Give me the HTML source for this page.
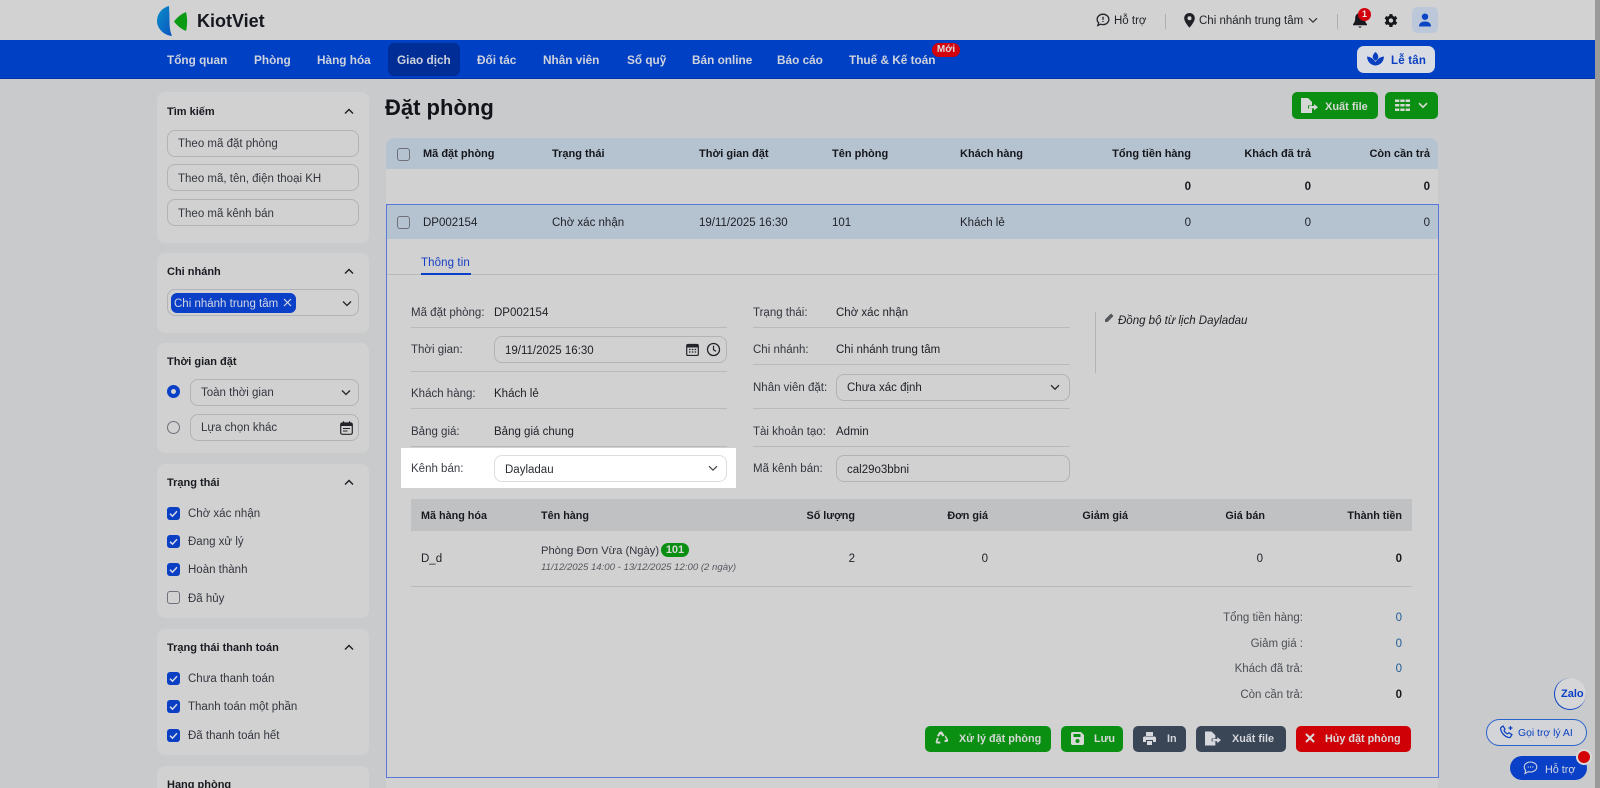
<!DOCTYPE html>
<html><head><meta charset="utf-8"><title>Đặt phòng</title>
<style>
*{box-sizing:border-box}
html,body{margin:0;padding:0;width:1600px;height:788px;overflow:hidden;background:#c9cacc}
body{position:relative;font-family:"Liberation Sans",sans-serif;font-size:11.5px;color:#1d1f26}
div,span.t,svg{position:absolute}
.t{position:absolute;white-space:nowrap;line-height:16px;height:16px;letter-spacing:0;margin-top:1px}
.r{transform:translateX(-100%)}
.b{font-weight:bold;font-size:11px}
.m{color:#202229}
.g{color:#33363e}
.n{color:#cfd3dd;font-weight:bold;font-size:11.8px;margin-top:0}
.p{background:#d1d1d1;border-radius:8px;left:157px;width:212px}
.i{border:1px solid #b2b3b6;border-radius:8px;background:#d1d1d1}
.l{height:1px;background:#b9babc}
.h{font-weight:bold;color:#191b20;font-size:11px}
.c{width:13px;height:13px;border-radius:3px;background:#0a3fc4;left:167px}
.u{width:13px;height:13px;border-radius:3px;border:1.2px solid #6e7179;background:#d1d1d1}
.btn{border-radius:5px;height:26px;color:#d8dade;font-weight:bold;font-size:11px}
</style></head><body>

<!-- top bar -->
<div style="left:0;top:0;width:1600px;height:40px;background:#d2d2d2"></div>
<svg style="left:155px;top:4px" width="34" height="34" viewBox="155 4 34 34"><defs><linearGradient id="lg" x1="0" y1="0" x2="1" y2="1"><stop offset="0" stop-color="#0a8dc8"/><stop offset="1" stop-color="#0a55c0"/></linearGradient></defs><path d="M169 6C161 8 157 15 157 21c0 7 6 14 15 15-2-5-2.500-9-2.500-15 0-5-.2-10-.5-15z" fill="url(#lg)"/><path d="M174 21.500c3-4 7-7.500 12-9.500 1.500 6 1.500 13 0 19-5-2-9-5.500-12-9.500z" fill="#0a9a14"/></svg>
<span class="t b" style="left:197px;top:11px;height:18px;line-height:18px;font-size:18px;color:#15181f">KiotViet</span>

<svg style="left:1096px;top:13px" width="14" height="14" viewBox="0 0 14 14"><path d="M7 1.200c3.300 0 5.900 2.300 5.900 5.200S10.300 11.600 7 11.600c-.8 0-1.500-.1-2.200-.4L1.800 12.500l.9-2.700C1.600 8.900 1.100 7.700 1.100 6.400 1.100 3.500 3.700 1.200 7 1.200z" fill="none" stroke="#24262c" stroke-width="1.300"/><path d="M7 3.700v3.200M7 8v1" stroke="#24262c" stroke-width="1.300"/></svg>
<span class="t m" style="left:1114px;top:12px">Hỗ trợ</span>
<div style="left:1165px;top:14px;width:1px;height:15px;background:#aeafb1"></div>
<svg style="left:1184px;top:13px" width="11" height="15" viewBox="0 0 11 15"><path d="M5.500 0C2.500 0 .2 2.300 .2 5.200c0 3.700 5.300 9.500 5.300 9.500s5.300-5.800 5.300-9.500C10.800 2.300 8.500 0 5.500 0zm0 7.200a2 2 0 110-4 2 2 0 010 4z" fill="#1f2126"/></svg>
<span class="t m" style="left:1199px;top:12px">Chi nhánh trung tâm</span>
<svg style="left:1308px;top:17px" width="10" height="7" viewBox="0 0 10 7"><path d="M1 1.200l4 4 4-4" fill="none" stroke="#33353b" stroke-width="1.200"/></svg>
<div style="left:1337px;top:14px;width:1px;height:15px;background:#aeafb1"></div>
<svg style="left:1352px;top:12px" width="16" height="17" viewBox="0 0 16 17"><path d="M8 1C5 1 3.200 3.300 3.200 6.200c0 3.800-1.500 5-2.200 6v1h14v-1c-.7-1-2.200-2.200-2.200-6C12.800 3.300 11 1 8 1z" fill="#17191e"/><path d="M6.300 14.500a1.800 1.800 0 003.400 0z" fill="#17191e"/></svg>
<div style="left:1358px;top:8px;width:13px;height:13px;border-radius:50%;background:#d4000c;color:#e6e6e6;font-size:9px;font-weight:bold;text-align:center;line-height:13px">1</div>
<svg style="left:1383px;top:13px" width="15" height="15" viewBox="0 0 24 24"><path d="M20.500 13.300a8.700 8.700 0 000-2.600l2.300-1.800-2.400-4.100-2.700 1.100a8.500 8.500 0 00-2.200-1.300L15.100 1.700h-4.800l-.4 2.900a8.500 8.500 0 00-2.200 1.300L5 4.800 2.600 8.900l2.300 1.800a8.700 8.700 0 000 2.600l-2.300 1.800L5 19.200l2.700-1.100a8.500 8.500 0 002.200 1.300l.4 2.900h4.800l.4-2.900a8.500 8.500 0 002.200-1.300l2.700 1.100 2.400-4.100zM12.700 15.500a3.500 3.500 0 110-7 3.500 3.500 0 010 7z" fill="#15171b" fill-rule="evenodd"/></svg>
<div style="left:1412px;top:7px;width:26px;height:26px;border-radius:5px;background:#bcc8da"></div>
<svg style="left:1418px;top:13px" width="14" height="14" viewBox="0 0 14 14"><circle cx="7" cy="3.700" r="3.200" fill="#0a45c4"/><path d="M1 13.500c0-3.500 2.500-5 6-5s6 1.500 6 5z" fill="#0a45c4"/></svg>

<!-- nav -->
<div style="left:0;top:40px;width:1595px;height:39px;background:#0040c4;border-bottom:1px solid #0034a6"></div>
<div style="left:388px;top:43px;width:72px;height:33px;border-radius:6px;background:#002e96"></div>
<span class="t n" style="left:167px;top:52px">Tổng quan</span>
<span class="t n" style="left:254px;top:52px">Phòng</span>
<span class="t n" style="left:317px;top:52px">Hàng hóa</span>
<span class="t n" style="left:397px;top:52px">Giao dịch</span>
<span class="t n" style="left:477px;top:52px">Đối tác</span>
<span class="t n" style="left:543px;top:52px">Nhân viên</span>
<span class="t n" style="left:627px;top:52px">Sổ quỹ</span>
<span class="t n" style="left:692px;top:52px">Bán online</span>
<span class="t n" style="left:777px;top:52px">Báo cáo</span>
<span class="t n" style="left:849px;top:52px">Thuế &amp; Kế toán</span>
<div style="left:932px;top:43px;width:28px;height:14px;border-radius:7px;background:#d4000c;color:#dcdcdc;font-size:10px;font-weight:bold;text-align:center;line-height:14px">Mới</div>
<div style="left:1357px;top:46px;width:78px;height:27px;border-radius:7px;background:#d9dce3"></div>
<svg style="left:1367px;top:52px" width="17" height="14" viewBox="0 0 17 14"><path d="M8.500 0c1.800 1.500 2.800 3.300 2.800 5 0 1.300-1.200 2.800-2.800 3.800C6.900 7.800 5.700 6.300 5.700 5 5.700 3.300 6.700 1.500 8.500 0z" fill="#0a40c0"/><path d="M0 4.500c3.500 .3 6.500 2.300 8.500 5.500 2-3.200 5-5.200 8.500-5.500-.2 5-3.500 8.700-8.500 9-5-.3-8.300-4-8.500-9z" fill="#0a40c0"/></svg>
<span class="t b" style="left:1391px;top:52px;color:#0a40c0;font-size:11.500px;letter-spacing:.2px">Lễ tân</span>

<!-- scrollbar -->
<div style="left:1595px;top:0;width:5px;height:788px;background:#9a9a9a"></div>

<!-- sidebar panels -->
<div class="p" style="top:92px;height:151px"></div>
<div class="p" style="top:253px;height:80px"></div>
<div class="p" style="top:343px;height:110px"></div>
<div class="p" style="top:464px;height:154px"></div>
<div class="p" style="top:629px;height:126px"></div>
<div class="p" style="top:766px;height:30px"></div>

<span class="t h" style="left:167px;top:103px">Tìm kiếm</span>
<span class="t h" style="left:167px;top:263px">Chi nhánh</span>
<span class="t h" style="left:167px;top:353px">Thời gian đặt</span>
<span class="t h" style="left:167px;top:474px">Trạng thái</span>
<span class="t h" style="left:167px;top:639px">Trạng thái thanh toán</span>
<span class="t h" style="left:167px;top:776px">Hạng phòng</span>
<svg style="left:344px;top:108px" width="10" height="7" viewBox="0 0 10 7"><path d="M1 5.500l4-4 4 4" fill="none" stroke="#191b20" stroke-width="1.400"/></svg>
<svg style="left:344px;top:268px" width="10" height="7" viewBox="0 0 10 7"><path d="M1 5.500l4-4 4 4" fill="none" stroke="#191b20" stroke-width="1.400"/></svg>
<svg style="left:344px;top:479px" width="10" height="7" viewBox="0 0 10 7"><path d="M1 5.500l4-4 4 4" fill="none" stroke="#191b20" stroke-width="1.400"/></svg>
<svg style="left:344px;top:644px" width="10" height="7" viewBox="0 0 10 7"><path d="M1 5.500l4-4 4 4" fill="none" stroke="#191b20" stroke-width="1.400"/></svg>

<div class="i" style="left:167px;top:130px;width:192px;height:27px"></div>
<div class="i" style="left:167px;top:164px;width:192px;height:27px"></div>
<div class="i" style="left:167px;top:199px;width:192px;height:27px"></div>
<span class="t g" style="left:178px;top:135px">Theo mã đặt phòng</span>
<span class="t g" style="left:178px;top:170px">Theo mã, tên, điện thoại KH</span>
<span class="t g" style="left:178px;top:205px">Theo mã kênh bán</span>

<div class="i" style="left:167px;top:289px;width:192px;height:27px"></div>
<div style="left:171px;top:293px;width:125px;height:20px;border-radius:6px;background:#0a40c8"></div>
<span class="t" style="left:174px;top:295px;color:#d4d8e2">Chi nhánh trung tâm</span>
<svg style="left:283px;top:298px" width="9" height="9" viewBox="0 0 9 9"><path d="M1 1l7 7M8 1L1 8" stroke="#d4d8e2" stroke-width="1.200"/></svg>
<svg style="left:342px;top:300px" width="10" height="7" viewBox="0 0 10 7"><path d="M1 1.500l4 4 4-4" fill="none" stroke="#22242a" stroke-width="1.300"/></svg>

<div style="left:167px;top:385px;width:13px;height:13px;border-radius:50%;border:4px solid #0a40c8;background:#d4d4d4"></div>
<div style="left:167px;top:421px;width:13px;height:13px;border-radius:50%;border:1.200px solid #6e7179"></div>
<div class="i" style="left:190px;top:379px;width:169px;height:27px"></div>
<div class="i" style="left:190px;top:414px;width:169px;height:27px"></div>
<span class="t g" style="left:201px;top:384px">Toàn thời gian</span>
<span class="t g" style="left:201px;top:419px">Lựa chọn khác</span>
<svg style="left:341px;top:389px" width="10" height="7" viewBox="0 0 10 7"><path d="M1 1.500l4 4 4-4" fill="none" stroke="#22242a" stroke-width="1.300"/></svg>
<svg style="left:340px;top:421px" width="13" height="14" viewBox="0 0 13 14"><rect x=".7" y="2" width="11.600" height="11.300" rx="1.500" fill="none" stroke="#22242a" stroke-width="1.200"/><path d="M.7 2.500h11.600v2.500H.7z" fill="#22242a"/><path d="M3.500 .3v2M9.500 .3v2" stroke="#22242a" stroke-width="1.200"/><path d="M3 7.500h7M3 10h4.500" stroke="#22242a"/></svg>

<!-- checkboxes -->
<div class="c" style="top:507px"></div><div class="c" style="top:535px"></div><div class="c" style="top:563px"></div>
<div class="u" style="left:167px;top:591px"></div>
<div class="c" style="top:672px"></div><div class="c" style="top:700px"></div><div class="c" style="top:729px"></div>
<svg style="left:167px;top:507px" width="13" height="13" viewBox="0 0 13 13"><path d="M3 6.700l2.500 2.500L10 4.200" fill="none" stroke="#d8dbe4" stroke-width="1.500"/></svg>
<svg style="left:167px;top:535px" width="13" height="13" viewBox="0 0 13 13"><path d="M3 6.700l2.500 2.500L10 4.200" fill="none" stroke="#d8dbe4" stroke-width="1.500"/></svg>
<svg style="left:167px;top:563px" width="13" height="13" viewBox="0 0 13 13"><path d="M3 6.700l2.500 2.500L10 4.200" fill="none" stroke="#d8dbe4" stroke-width="1.500"/></svg>
<svg style="left:167px;top:672px" width="13" height="13" viewBox="0 0 13 13"><path d="M3 6.700l2.500 2.500L10 4.200" fill="none" stroke="#d8dbe4" stroke-width="1.500"/></svg>
<svg style="left:167px;top:700px" width="13" height="13" viewBox="0 0 13 13"><path d="M3 6.700l2.500 2.500L10 4.200" fill="none" stroke="#d8dbe4" stroke-width="1.500"/></svg>
<svg style="left:167px;top:729px" width="13" height="13" viewBox="0 0 13 13"><path d="M3 6.700l2.500 2.500L10 4.200" fill="none" stroke="#d8dbe4" stroke-width="1.500"/></svg>
<span class="t g" style="left:188px;top:505px">Chờ xác nhận</span>
<span class="t g" style="left:188px;top:533px">Đang xử lý</span>
<span class="t g" style="left:188px;top:561px">Hoàn thành</span>
<span class="t g" style="left:188px;top:590px">Đã hủy</span>
<span class="t g" style="left:188px;top:670px">Chưa thanh toán</span>
<span class="t g" style="left:188px;top:698px">Thanh toán một phần</span>
<span class="t g" style="left:188px;top:727px">Đã thanh toán hết</span>

<!-- title -->
<span class="t b" style="left:385px;top:94px;height:26px;line-height:26px;font-size:22px;color:#111318">Đặt phòng</span>
<div style="left:1292px;top:92px;width:86px;height:27px;border-radius:5px;background:#0b8f13"></div>
<svg style="left:1301px;top:98px" width="17" height="15" viewBox="0 0 17 15"><path d="M0 0h7l4 4v3.500H7v3h4V15H0z" fill="#d6d8d6"/><path d="M8 8h5V6l4 3.200-4 3.200v-2H8z" fill="#d6d8d6"/></svg>
<span class="t b" style="left:1325px;top:98px;color:#d6d8d6">Xuất file</span>
<div style="left:1385px;top:92px;width:53px;height:27px;border-radius:5px;background:#0b8f13"></div>
<svg style="left:1395px;top:99px" width="15" height="13" viewBox="0 0 15 13"><path d="M0 .5h4.300v2.500H0zM5.300 .5h4.300v2.500H5.300zM10.600 .5H15v2.500h-4.400zM0 5h4.300v2.500H0zM5.300 5h4.300v2.500H5.300zM10.600 5H15v2.500h-4.400zM0 9.500h4.300V12H0zM5.300 9.500h4.300V12H5.300zM10.600 9.500H15V12h-4.400z" fill="#d6d8d6"/></svg>
<svg style="left:1418px;top:102px" width="10" height="7" viewBox="0 0 10 7"><path d="M1 1.200l4 4 4-4" fill="none" stroke="#d6d8d6" stroke-width="1.600"/></svg>

<!-- main table -->
<div style="left:386px;top:138px;width:1052px;height:660px;background:#d1d1d1;border-radius:8px 8px 0 0"></div>
<div style="left:386px;top:138px;width:1052px;height:31px;background:#b5c2d0;border-radius:8px 8px 0 0"></div>
<div class="u" style="left:397px;top:148px;background:transparent"></div>
<span class="t b" style="left:423px;top:145px;color:#15171c">Mã đặt phòng</span>
<span class="t b" style="left:552px;top:145px;color:#15171c">Trạng thái</span>
<span class="t b" style="left:699px;top:145px;color:#15171c">Thời gian đặt</span>
<span class="t b" style="left:832px;top:145px;color:#15171c">Tên phòng</span>
<span class="t b" style="left:960px;top:145px;color:#15171c">Khách hàng</span>
<span class="t b r" style="left:1191px;top:145px;color:#15171c">Tổng tiền hàng</span>
<span class="t b r" style="left:1311px;top:145px;color:#15171c">Khách đã trả</span>
<span class="t b r" style="left:1430px;top:145px;color:#15171c">Còn cần trả</span>
<span class="t b r" style="left:1191px;top:178px;color:#15171c;font-size:11.500px">0</span>
<span class="t b r" style="left:1311px;top:178px;color:#15171c;font-size:11.500px">0</span>
<span class="t b r" style="left:1430px;top:178px;color:#15171c;font-size:11.500px">0</span>

<div style="left:386px;top:204px;width:1053px;height:574px;border:1px solid #5a78dc"></div>
<div style="left:387px;top:205px;width:1051px;height:34px;background:#b5c2d0"></div>
<div class="u" style="left:397px;top:216px;background:transparent"></div>
<span class="t m" style="left:423px;top:214px">DP002154</span>
<span class="t m" style="left:552px;top:214px">Chờ xác nhận</span>
<span class="t m" style="left:699px;top:214px">19/11/2025 16:30</span>
<span class="t m" style="left:832px;top:214px">101</span>
<span class="t m" style="left:960px;top:214px">Khách lẻ</span>
<span class="t m r" style="left:1191px;top:214px">0</span>
<span class="t m r" style="left:1311px;top:214px">0</span>
<span class="t m r" style="left:1430px;top:214px">0</span>

<span class="t" style="left:421px;top:254px;color:#1640c4;letter-spacing:.1px">Thông tin</span>
<div class="l" style="left:387px;top:274px;width:1051px"></div>
<div style="left:421px;top:273px;width:50px;height:2px;background:#0a3fc8"></div>

<!-- form left -->
<span class="t g" style="left:411px;top:304px">Mã đặt phòng:</span>
<span class="t m" style="left:494px;top:304px">DP002154</span>
<div class="l" style="left:411px;top:327px;width:316px"></div>
<span class="t g" style="left:411px;top:341px">Thời gian:</span>
<div class="i" style="left:494px;top:336px;width:233px;height:27px"></div>
<span class="t m" style="left:505px;top:342px">19/11/2025 16:30</span>
<svg style="left:686px;top:343px" width="13" height="13" viewBox="0 0 13 13"><rect x=".7" y="1.500" width="11.600" height="11" rx="1.300" fill="none" stroke="#22242a" stroke-width="1.200"/><path d="M.7 2h11.600v2.500H.7z" fill="#22242a"/><path d="M3 6.500h1.500M5.800 6.500h1.500M8.600 6.500h1.500M3 9h1.500M5.800 9h1.500M8.600 9h1.500" stroke="#22242a" stroke-width="1.200"/></svg>
<svg style="left:706px;top:342px" width="15" height="15" viewBox="0 0 15 15"><circle cx="7.500" cy="7.500" r="6" fill="none" stroke="#22242a" stroke-width="1.300"/><path d="M7.500 3.800v4l2.500 1.500" fill="none" stroke="#22242a" stroke-width="1.200"/></svg>
<div class="l" style="left:411px;top:371px;width:316px"></div>
<span class="t g" style="left:411px;top:385px">Khách hàng:</span>
<span class="t m" style="left:494px;top:385px">Khách lẻ</span>
<div class="l" style="left:411px;top:408px;width:316px"></div>
<span class="t g" style="left:411px;top:423px">Bảng giá:</span>
<span class="t m" style="left:494px;top:423px">Bảng giá chung</span>
<div class="l" style="left:411px;top:446px;width:316px"></div>
<div style="left:401px;top:448px;width:335px;height:40px;background:#fff"></div>
<span class="t" style="left:411px;top:460px;color:#3a3d45">Kênh bán:</span>
<div style="left:494px;top:455px;width:233px;height:27px;border:1px solid #dcdde0;border-radius:8px;background:#fff"></div>
<span class="t" style="left:505px;top:461px;color:#2a2d34">Dayladau</span>
<svg style="left:708px;top:465px" width="10" height="7" viewBox="0 0 10 7"><path d="M1 1.200l4 4 4-4" fill="none" stroke="#444" stroke-width="1.200"/></svg>

<!-- form right -->
<span class="t g" style="left:753px;top:304px">Trạng thái:</span>
<span class="t m" style="left:836px;top:304px">Chờ xác nhận</span>
<div class="l" style="left:753px;top:327px;width:317px"></div>
<span class="t g" style="left:753px;top:341px">Chi nhánh:</span>
<span class="t m" style="left:836px;top:341px">Chi nhánh trung tâm</span>
<div class="l" style="left:753px;top:364px;width:317px"></div>
<span class="t g" style="left:753px;top:379px">Nhân viên đặt:</span>
<div class="i" style="left:836px;top:374px;width:234px;height:27px"></div>
<span class="t m" style="left:847px;top:379px">Chưa xác định</span>
<svg style="left:1050px;top:384px" width="10" height="7" viewBox="0 0 10 7"><path d="M1 1.200l4 4 4-4" fill="none" stroke="#22242a" stroke-width="1.300"/></svg>
<div class="l" style="left:753px;top:408px;width:317px"></div>
<span class="t g" style="left:753px;top:423px">Tài khoản tạo:</span>
<span class="t m" style="left:836px;top:423px">Admin</span>
<div class="l" style="left:753px;top:446px;width:317px"></div>
<span class="t g" style="left:753px;top:460px">Mã kênh bán:</span>
<div class="i" style="left:836px;top:455px;width:234px;height:27px"></div>
<span class="t m" style="left:847px;top:461px">cal29o3bbni</span>
<div style="left:1095px;top:312px;width:1px;height:61px;background:#b2b3b6"></div>
<svg style="left:1104px;top:313px" width="10" height="10" viewBox="0 0 10 10"><path d="M7 .5l2.500 2.500-6 6H1V6.500z" fill="#55575c"/></svg>
<span class="t" style="left:1118px;top:312px;font-style:italic;color:#1b1d23">Đồng bộ từ lịch Dayladau</span>

<!-- items table -->
<div style="left:411px;top:499px;width:1001px;height:32px;background:#c0c1c3"></div>
<span class="t b" style="left:421px;top:507px;color:#17191e;font-size:10.800px">Mã hàng hóa</span>
<span class="t b" style="left:541px;top:507px;color:#17191e;font-size:10.800px">Tên hàng</span>
<span class="t b r" style="left:855px;top:507px;color:#17191e;font-size:10.800px">Số lượng</span>
<span class="t b r" style="left:988px;top:507px;color:#17191e;font-size:10.800px">Đơn giá</span>
<span class="t b r" style="left:1128px;top:507px;color:#17191e;font-size:10.800px">Giảm giá</span>
<span class="t b r" style="left:1265px;top:507px;color:#17191e;font-size:10.800px">Giá bán</span>
<span class="t b r" style="left:1402px;top:507px;color:#17191e;font-size:10.800px">Thành tiền</span>
<span class="t m" style="left:421px;top:550px">D_d</span>
<span class="t g" style="left:541px;top:542px;font-size:11.200px">Phòng Đơn Vừa (Ngày)</span>
<div style="left:661px;top:543px;width:28px;height:14px;border-radius:7px;background:#0b8f13;color:#d8dad8;font-size:11px;font-weight:bold;text-align:center;line-height:14px">101</div>
<span class="t" style="left:541px;top:559px;font-size:9.600px;font-style:italic;color:#55585f">11/12/2025 14:00 - 13/12/2025 12:00 (2 ngày)</span>
<span class="t m r" style="left:855px;top:550px">2</span>
<span class="t m r" style="left:988px;top:550px">0</span>
<span class="t m r" style="left:1263px;top:550px">0</span>
<span class="t b r" style="left:1402px;top:550px;color:#15171c;font-size:11.500px">0</span>
<div class="l" style="left:411px;top:586px;width:1001px"></div>

<span class="t r" style="left:1303px;top:609px;color:#4d5057">Tổng tiền hàng:</span>
<span class="t r" style="left:1303px;top:635px;color:#4d5057">Giảm giá :</span>
<span class="t r" style="left:1303px;top:660px;color:#4d5057">Khách đã trả:</span>
<span class="t r" style="left:1303px;top:686px;color:#4d5057">Còn cần trả:</span>
<span class="t r" style="left:1402px;top:609px;color:#1e5a96">0</span>
<span class="t r" style="left:1402px;top:635px;color:#1e5a96">0</span>
<span class="t r" style="left:1402px;top:660px;color:#1e5a96">0</span>
<span class="t b r" style="left:1402px;top:686px;color:#15171c;font-size:11.500px">0</span>

<!-- action buttons -->
<div class="btn" style="left:925px;top:726px;width:126px;background:#0b8f13"></div>
<svg style="left:935px;top:731px" width="14" height="14" viewBox="0 0 14 14"><path d="M7 .5l2.500 4-2 1L5.600 3 3.800 5.800 2 4.700 4.300 1C4.800 .5 5.500 .5 7 .5zM10.500 4.200L13 8.500c.5 1 0 2.200-1.200 2.400H9.500v-2l2 0-1.800-3zM2 6.500l1.800 1L2.300 10.500h3v2H2C1 12.500 .3 11.500 .8 10.300z" fill="#d6d8d6"/></svg>
<span class="t b" style="left:959px;top:730px;color:#d6d8d6;font-size:10.800px">Xử lý đặt phòng</span>
<div class="btn" style="left:1061px;top:726px;width:62px;background:#0b8f13"></div>
<svg style="left:1071px;top:732px" width="13" height="13" viewBox="0 0 13 13"><path d="M1.500 0H10l3 3v8.500c0 .8-.7 1.500-1.500 1.500h-10C.7 13 0 12.300 0 11.500v-10C0 .7 .7 0 1.500 0zM2.500 2v3h7V2zM6.500 7a2 2 0 100 4 2 2 0 000-4z" fill="#d6d8d6" fill-rule="evenodd"/></svg>
<span class="t b" style="left:1094px;top:730px;color:#d6d8d6;font-size:10.800px">Lưu</span>
<div class="btn" style="left:1133px;top:726px;width:53px;background:#3a4656"></div>
<svg style="left:1143px;top:732px" width="13" height="13" viewBox="0 0 13 13"><path d="M3 0h7v4H3zM1.500 4.500h10c.8 0 1.500 .7 1.500 1.500v4h-3V8H3v2H0V6c0-.8 .7-1.500 1.500-1.500zM4 9h5v4H4z" fill="#d6d8de"/></svg>
<span class="t b" style="left:1167px;top:730px;color:#d6d8de;font-size:10.800px">In</span>
<div class="btn" style="left:1196px;top:726px;width:90px;background:#3a4656"></div>
<svg style="left:1205px;top:731px" width="16" height="15" viewBox="0 0 17 15"><path d="M0 0h7l4 4v3.500H7v3h4V15H0z" fill="#d6d8de"/><path d="M8 8h5V6l4 3.200-4 3.200v-2H8z" fill="#d6d8de"/></svg>
<span class="t b" style="left:1232px;top:730px;color:#d6d8de;font-size:10.800px">Xuất file</span>
<div class="btn" style="left:1296px;top:726px;width:115px;background:#cf0006"></div>
<svg style="left:1305px;top:733px" width="10" height="10" viewBox="0 0 10 10"><path d="M1 1l8 8M9 1L1 9" stroke="#dcdcdc" stroke-width="2"/></svg>
<span class="t b" style="left:1325px;top:730px;color:#dcdcdc;font-size:10.800px">Hủy đặt phòng</span>

<!-- floating -->
<div style="left:1554px;top:678px;width:32px;height:32px;border-radius:50%;background:#d6d6d8;border-left:1.500px solid #0a40c4;border-bottom:1.500px solid #0a40c4"></div>
<span class="t b" style="left:1561px;top:685px;color:#0a40c4;font-size:11px">Zalo</span>
<div style="left:1486px;top:719px;width:101px;height:27px;border-radius:14px;border:1px solid #2a62cc;background:#d3d4d7"></div>
<svg style="left:1499px;top:725px" width="15" height="15" viewBox="0 0 15 15"><path d="M2 2.500l2-1.500 2 3-1 1.200c.5 1.600 2 3.100 3.600 3.600L10 7.700l3 2-1.500 2.200c-.5 .7-1.400 .8-2.300 .5C5.700 11.300 3 8.600 1.800 5c-.3-.9-.4-1.800 .2-2.500z" fill="none" stroke="#0a40c4" stroke-width="1.200"/><path d="M11.500 1v4M9.500 3h4" stroke="#0a40c4" stroke-width="1.200"/></svg>
<span class="t" style="left:1518px;top:725px;color:#0a40c4;font-size:10.400px">Gọi trợ lý AI</span>
<div style="left:1510px;top:756px;width:77px;height:24px;border-radius:12px;background:#0a40c8"></div>
<svg style="left:1523px;top:761px" width="15" height="14" viewBox="0 0 15 14"><path d="M7.500 1C11 1 13.800 3.200 13.800 6S11 11 7.500 11c-.8 0-1.500-.1-2.200-.3L2 12.500l.7-3C1.800 8.600 1.200 7.400 1.200 6 1.200 3.200 4 1 7.500 1z" fill="none" stroke="#d2d6e0" stroke-width="1.100"/><path d="M4.700 6h1M7 6h1M9.300 6h1" stroke="#d2d6e0" stroke-width="1.200"/></svg>
<span class="t" style="left:1545px;top:761px;color:#d2d6e0;font-size:10.800px">Hỗ trợ</span>
<div style="left:1576px;top:749px;width:16px;height:16px;border-radius:50%;background:#d40006;border:2px solid #d8d8d8"></div>

</body></html>
